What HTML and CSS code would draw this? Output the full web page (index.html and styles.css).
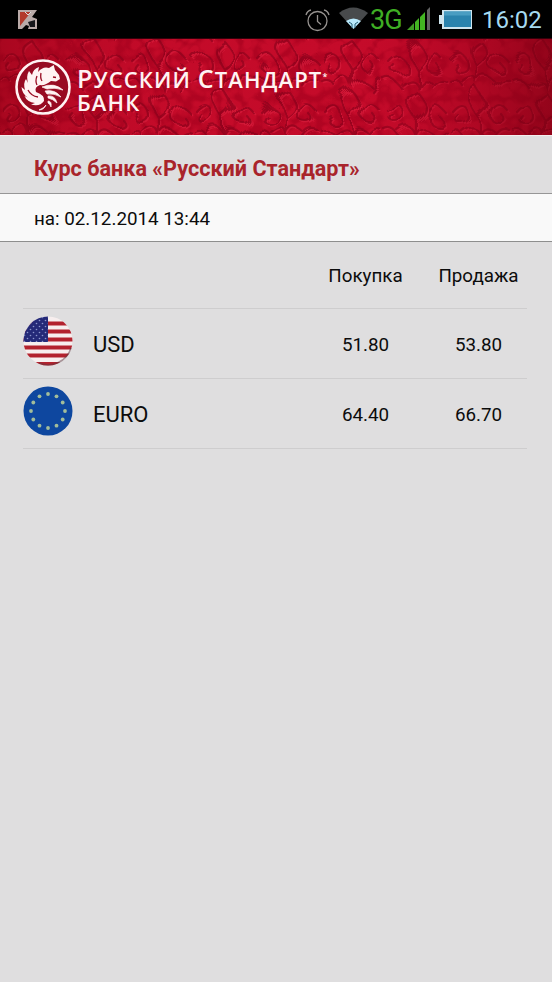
FILE: index.html
```
<!DOCTYPE html>
<html lang="ru">
<head>
    <meta charset="UTF-8">
    <title>Курс банка</title>
    <link rel="stylesheet" href="styles.css">
</head>
<body>
<div class="status">
    <svg class="kasper" width="20" height="20" viewBox="0 0 20 20">
        <path d="M0 0H19L14 7L19 9V19H10L11 16L8 15L4 19H0Z" fill="#b9aaa8"/>
        <path d="M2 2H13L2 16Z" fill="#b33a2c"/>
        <path d="M10 12L17 10V17H12Z" fill="#17171b"/>
        <path d="M7 2L10 5L13 2" fill="none" stroke="#ddd"/>
    </svg>
    <svg class="tray" width="192" height="38" viewBox="-12 0 192 38">
        <g fill="none" stroke="#96928f" stroke-width="1.3">
            <circle cx="15.500" cy="20" r="9.500"/>
            <path d="M15.500 14V20.500L19 23.500M4 14Q5 10 9 9M22 9Q26 10 27 14"/>
        </g>
        <path d="M37 12Q51 1 66 12L51.500 28Z" fill="#484a4c"/>
        <path d="M44 20Q51.500 15 59 20L51.500 28Z" fill="#b9e9fb"/>
        <path d="M47 21L50 23V27M56 21L53 23V27" stroke="#245c74" fill="none"/>
        <path d="M105 29L112 22V29Z" fill="#3f9d24"/>
        <path d="M113 29V21L117 17V29ZM118 29V16L123 11V29Z" fill="#43b522"/>
        <path d="M125 29V9L128 6V29Z" fill="#626262"/>
        <path d="M137 14H140V9H170V28H140V23H137Z" fill="#cfe5ee"/>
        <rect x="142" y="10.500" width="27" height="15.500" fill="#2b83ad"/>
        <rect x="142" y="10.500" width="27" height="4" fill="#4a9dc2"/>
    </svg>
    <span class="net">3G</span>
    <span class="clock">16:02</span>
</div>
<div class="header">
    <svg class="pattern" width="552" height="96" viewBox="0 0 552 96">
        <defs>
            <filter id="gloss" x="0" y="0" width="100%" height="100%" color-interpolation-filters="sRGB">
                <feTurbulence type="turbulence" baseFrequency="0.05" numOctaves="2" seed="5"/>
                <feColorMatrix values="0 0 0 0 .92  0 0 0 0 .1  0 0 0 0 .22  3 2 0 0 -.7"/>
            </filter>
            <filter id="warp" x="0" y="0" width="100%" height="100%">
                <feTurbulence type="fractalNoise" baseFrequency="0.03" numOctaves="2" seed="3" result="noise"/>
                <feDisplacementMap in="SourceGraphic" in2="noise" scale="22"/>
                <feGaussianBlur stdDeviation=".6"/>
            </filter>
            <!-- damask curls -->
            <g id="curls" fill="none" stroke-linecap="round">
                <path d="M32 2Q20 8 24 16T32 30Q44 22 40 14T32 2M4 22Q14 10 20 22Q24 34 12 34Q4 32 10 26M60 22Q50 10 44 22Q40 34 52 34Q60 32 54 26M32 32V46M16 44Q28 34 32 46Q36 34 48 44M2 42Q10 38 16 48M62 42Q54 38 48 48"/>
            </g>
            <pattern id="damask" width="64" height="50" patternUnits="userSpaceOnUse">
                <use href="#curls" x="1.500" y="1.500" stroke="#e62a49" stroke-width="1.500"/>
                <use href="#curls" stroke="#700016" stroke-width="2.200"/>
            </pattern>
            <linearGradient id="shade" x1="0" x2="1" y1="0" y2="0">
                <stop offset="0" stop-color="#850012" stop-opacity=".45"/>
                <stop offset=".3" stop-color="#b80525" stop-opacity=".15"/>
                <stop offset=".65" stop-color="#c0052a" stop-opacity=".15"/>
                <stop offset="1" stop-color="#780012" stop-opacity=".65"/>
            </linearGradient>
        </defs>
        <rect width="552" height="96" fill="#ae0421"/>
        <rect width="552" height="96" filter="url(#gloss)" opacity=".4"/>
        <g filter="url(#warp)" opacity=".5">
            <rect x="-20" y="-20" width="592" height="136" fill="url(#damask)"/>
        </g>
        <rect width="552" height="96" fill="url(#shade)"/>
    </svg>
    <div class="brand">
        <svg class="logo" width="56" height="56" viewBox="0 0 56 56">
            <circle cx="28" cy="28" r="26.500" fill="#980b22" stroke="#fff3f3" stroke-width="2.600"/>
            <path d="M38.700 6L40 11L44 16L45 20L41 22.500L36 22Q30 27 25 26Q19 28 21 33Q30 36 29 42Q25 48 16 45.500L20 44Q12 43 9.500 37L13 38.500Q7 35 6.500 28L10 31Q8 24 11 20L13 24Q11 17 14 12L17 16Q18 10 24 8L23 13Q28 7 34 9Z" fill="#fff3f3"/>
            <path d="M26 14Q25 19 27 22M22 17Q20 22 22 26M38 18L41 18.500M13 31Q16 37 23 38" fill="none" stroke="#980b22" stroke-width="1.300"/>
            <path d="M27 28Q39 23 48 31Q40 28 32 30ZM30 32Q40 30 46 38Q39 34 32 35ZM33 37Q40 36 42 44Q38 40 33 39ZM33 42Q37 42 36 48Q35 45 33 44ZM31 46Q29 51 24 51Q29 49 31 46Z" fill="#fff3f3" stroke="#fff3f3" stroke-width=".7"/>
        </svg>
        <div class="name">
            <div class="line"><b>Р</b>усский <b>С</b>тандарт<i>*</i></div>
            <div class="line second">Банк</div>
        </div>
    </div>
</div>
<div class="title">Курс банка «Русский Стандарт»</div>
<div class="date">на: 02.12.2014 13:44</div>
<div class="rates">
    <div class="row head">
        <span></span>
        <span></span>
        <span class="value">Покупка</span>
        <span class="value">Продажа</span>
    </div>
    <div class="row">
        <svg class="flag" width="50" height="50" viewBox="0 0 50 50">
            <defs>
                <clipPath id="round"><circle cx="25" cy="25" r="24.500"/></clipPath>
                <pattern id="stars" width="6" height="6" patternUnits="userSpaceOnUse">
                    <circle cx="1.500" cy="1.500" r=".8" fill="#8d95cc"/>
                    <circle cx="4.500" cy="4.500" r=".8" fill="#8d95cc"/>
                </pattern>
            </defs>
            <g clip-path="url(#round)">
                <rect width="50" height="50" fill="#f7eeee"/>
                <path d="M0 7.500H50M0 15.500H50M0 23.500H50M0 31.500H50M0 39.500H50M0 48H50" stroke="#b3222e" stroke-width="4"/>
                <rect width="25" height="26" fill="#252a78"/>
                <rect width="25" height="26" fill="url(#stars)"/>
            </g>
            <path d="M48 32A24 24 0 0 1 16 47" fill="none" stroke="#5b3a42" stroke-opacity=".5" stroke-width="1.500"/>
        </svg>
        <span class="code">USD</span>
        <span class="value">51.80</span>
        <span class="value">53.80</span>
    </div>
    <div class="row">
        <svg class="flag" width="50" height="50" viewBox="0 0 50 50">
            <circle cx="25" cy="25" r="24.500" fill="#0e479f"/>
            <g fill="#a3bd9a">
                <circle cx="25" cy="8" r="1.900"/><circle cx="33.500" cy="10.300" r="1.900"/>
                <circle cx="39.700" cy="16.500" r="1.900"/><circle cx="42" cy="25" r="1.900"/>
                <circle cx="39.700" cy="33.500" r="1.900"/><circle cx="33.500" cy="39.700" r="1.900"/>
                <circle cx="25" cy="42" r="1.900"/><circle cx="16.500" cy="39.700" r="1.900"/>
                <circle cx="10.300" cy="33.500" r="1.900"/><circle cx="8" cy="25" r="1.900"/>
                <circle cx="10.300" cy="16.500" r="1.900"/><circle cx="16.500" cy="10.300" r="1.900"/>
            </g>
        </svg>
        <span class="code">EURO</span>
        <span class="value">64.40</span>
        <span class="value">66.70</span>
    </div>
</div>
</body>
</html>
```
FILE: styles.css
```
* {
    margin: 0;
    padding: 0;
    box-sizing: border-box;
}

body {
    width: 552px;
    height: 982px;
    overflow: hidden;
    background-color: #dfdedf;
    font-family: Roboto, "Liberation Sans", sans-serif;
    color: #0c0c0c;
}

.status {
    display: grid;
    grid-template-columns: 290px 80px 112px 70px;
    align-items: center;
    height: 39px;
    background-color: #000;
    border-bottom: 1px solid #35000a;
}

.status > * {
    grid-row: 1;
}

.kasper {
    grid-column: 1;
    margin: 0 0 0 18px;
}

.tray {
    grid-column: 2 / 4;
}

.net {
    grid-column: 3;
    color: #3fae24;
    font-size: 27px;
    line-height: 38px;
    letter-spacing: -1px;
}

.clock {
    grid-column: 4;
    color: #a5daf0;
    font-size: 24px;
    line-height: 40px;
}

.header {
    display: grid;
    height: 96px;
}

.pattern,
.brand {
    grid-area: 1 / 1;
}

.brand {
    display: flex;
    z-index: 1;
    padding: 20px 0 0 15px;
}

.name {
    padding: 9px 0 0 6px;
    font-family: "Open Sans", "Noto Sans", sans-serif;
    font-weight: 600;
    color: #fff3f3;
}

.line {
    height: 23px;
    font-size: 22px;
    line-height: 22px;
    letter-spacing: 1.1px;
    text-transform: uppercase;
    white-space: nowrap;
}

.line b {
    font-size: 25px;
    font-weight: 600;
    line-height: 20px;
}

.line i {
    font-size: 9px;
    font-style: normal;
    line-height: 9px;
    vertical-align: 8px;
}

.title {
    height: 59px;
    padding-left: 34px;
    border-top: 1px solid #f4eeee;
    border-bottom: 1px solid #969696;
    color: #a9242b;
    font-size: 21.6px;
    font-weight: 700;
    line-height: 65px;
}

.date {
    height: 48px;
    padding-left: 34px;
    background-color: #f9f9f9;
    border-bottom: 1px solid #8e8e8e;
    font-size: 18.8px;
    line-height: 50px;
}

.rates {
    padding: 0 25px 0 23px;
}

.row {
    display: grid;
    grid-template-columns: 70px 216px 113px 113px;
    align-items: center;
    height: 70px;
    padding-top: 1px;
    border-bottom: 1px solid #cecdce;
}

.row.head {
    height: 67px;
    padding: 0;
}

.flag {
    margin-bottom: 6px;
}

.code {
    font-size: 22px;
}

.value {
    padding-top: 1px;
    font-size: 18.8px;
    text-align: center;
}
```
